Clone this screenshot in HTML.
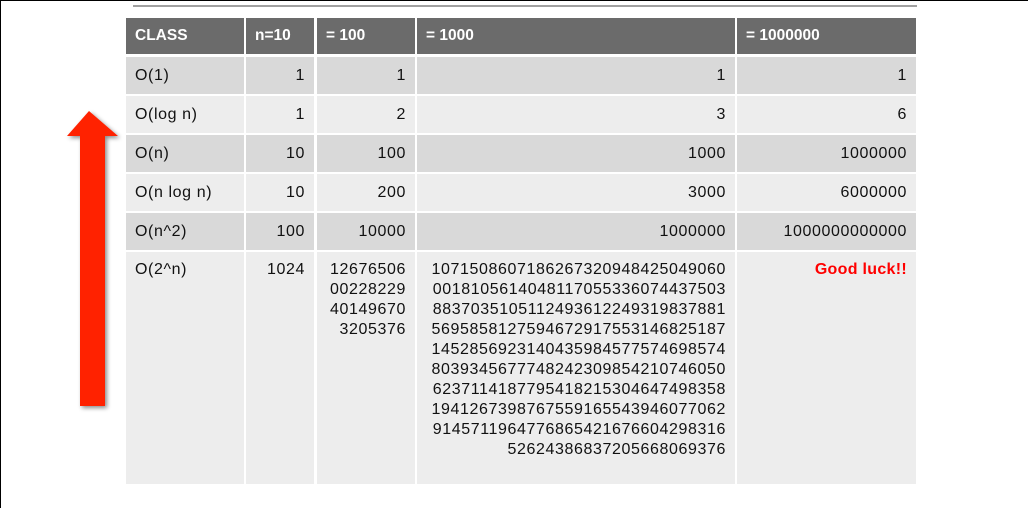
<!DOCTYPE html>
<html><head><style>
*{margin:0;padding:0;box-sizing:border-box}
body{width:1028px;height:508px;background:#fff;position:relative;overflow:hidden;font-family:"Liberation Sans",sans-serif;font-size:16px;color:#111;border-top:1px solid #000;border-left:1px solid #000}
.c{position:absolute;padding:0 9px;line-height:20px;letter-spacing:0.6px}
.h{background:#6b6b6b;color:#fff;font-weight:bold;font-size:15.5px;letter-spacing:0}
.d{background:#d9d9d9}.l{background:#ededed}
.r{text-align:right}
</style></head><body>
<div style="position:absolute;left:132px;top:4px;width:784px;height:2px;background:#a0a0a0"></div>
<svg style="position:absolute;left:60px;top:105px" width="70" height="310">
<defs><filter id="s"><feDropShadow dx="2" dy="2" stdDeviation="2" flood-color="#000" flood-opacity="0.45"/></filter></defs>
<polygon points="28,5 57,30 44,30 44,300 19,300 19,30 6,30" fill="#ff2200" filter="url(#s)"/>
</svg>
<div id="t"></div>
<script>
var cols=[[125,118],[245,68],[316,98],[416,318],[736,179]];
var rows=[[17,36],[56,37],[95,37],[134,37],[173,37],[212,37],[251,232]];
var data=[["CLASS","n=10","= 100","= 1000","= 1000000"],
["O(1)","1","1","1","1"],["O(log n)","1","2","3","6"],["O(n)","10","100","1000","1000000"],
["O(n log n)","10","200","3000","6000000"],["O(n^2)","100","10000","1000000","1000000000000"],
["O(2^n)","1024","12676506<br>00228229<br>40149670<br>3205376","1071508607186267320948425049060<br>0018105614048117055336074437503<br>8837035105112493612249319837881<br>5695858127594672917553146825187<br>1452856923140435984577574698574<br>8039345677748242309854210746050<br>6237114187795418215304647498358<br>1941267398767559165543946077062<br>9145711964776865421676604298316<br>52624386837205668069376",'<span style="color:#f00;font-weight:bold;letter-spacing:0.3px;font-size:16px">Good luck!!</span>']];
var h='';
for(var i=0;i<rows.length;i++)for(var j=0;j<5;j++){
var cls=i==0?'h':(i%2?'d':'l');
var al=(i>0&&j>0)?' r':'';
var pt=i==0?8:(i==6?8:9);
h+='<div class="c '+cls+al+'" style="left:'+cols[j][0]+'px;top:'+rows[i][0]+'px;width:'+cols[j][1]+'px;height:'+rows[i][1]+'px;padding-top:'+pt+'px">'+data[i][j]+'</div>';}
document.getElementById('t').innerHTML=h;
</script>
</body></html>
